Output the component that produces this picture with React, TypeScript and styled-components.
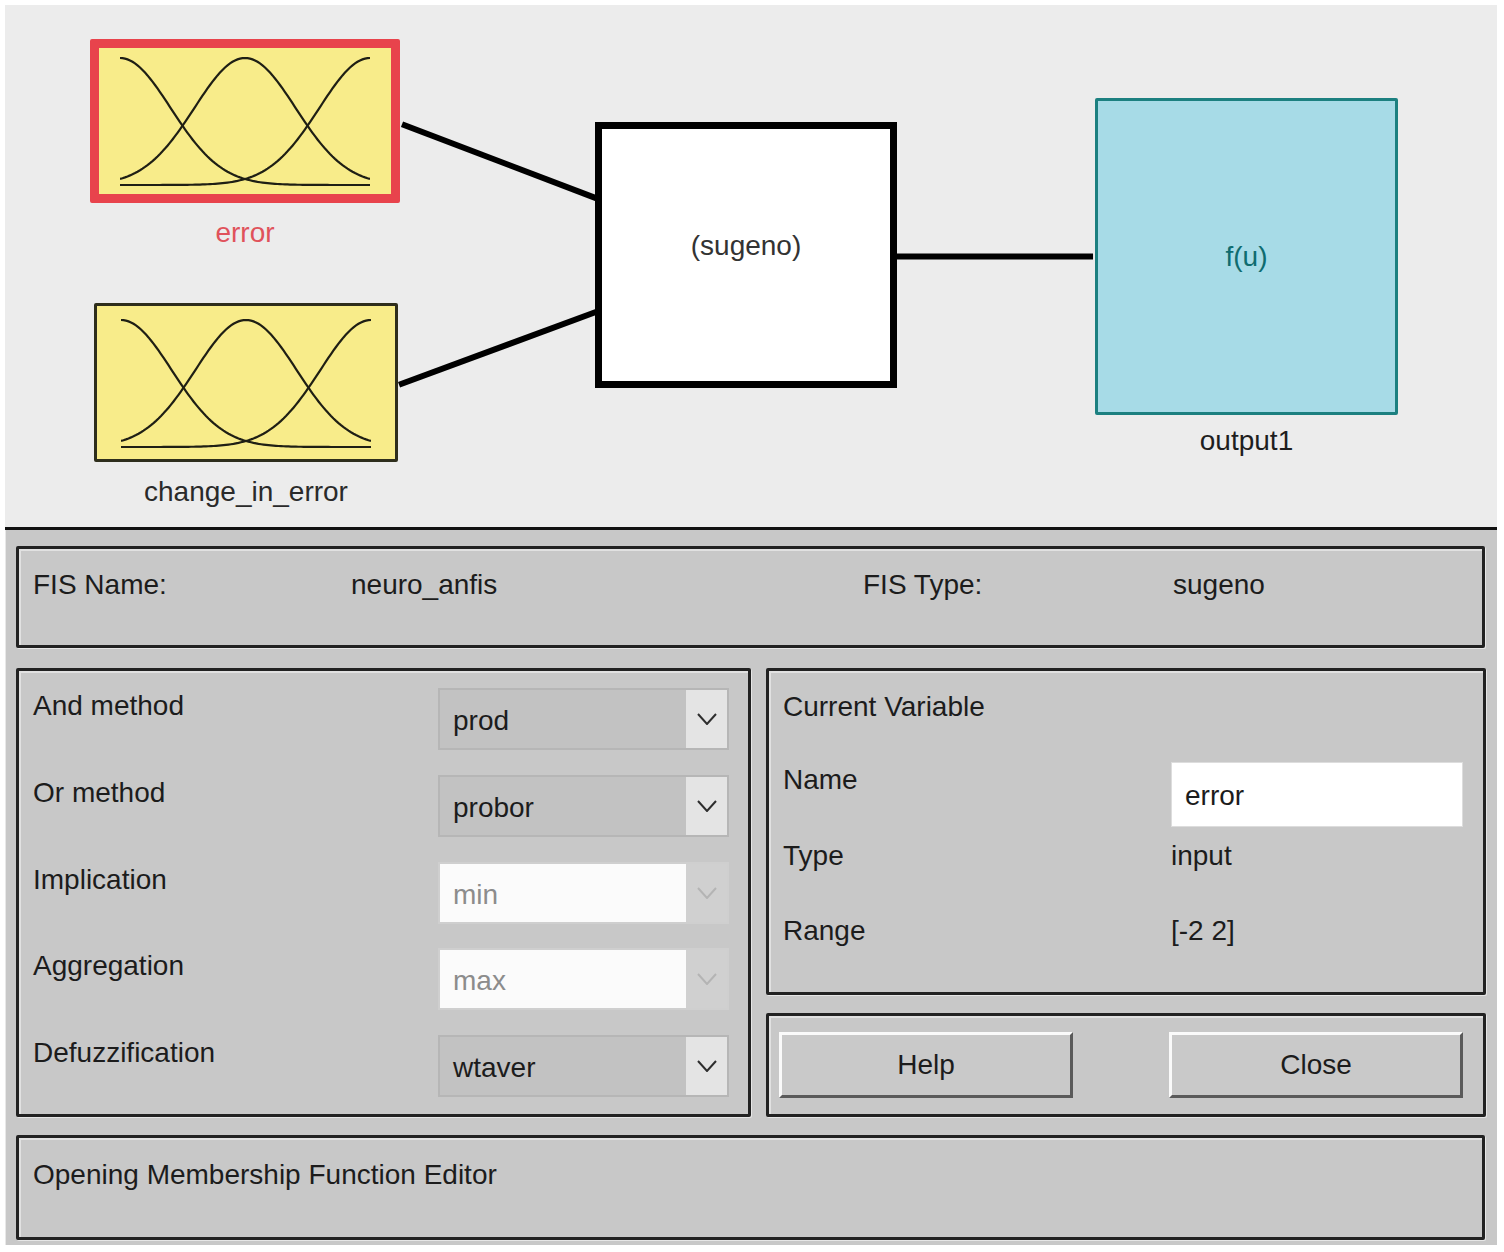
import React from "react";
import styled, { createGlobalStyle } from "styled-components";

const GlobalStyle = createGlobalStyle`
  html, body {
    margin: 0;
    padding: 0;
    background: #ffffff;
  }
  body {
    font-family: "Liberation Sans", Arial, sans-serif;
    color: #1c1c1c;
  }
  * {
    box-sizing: border-box;
  }
`;

const Page = styled.div`
  width: 1504px;
  height: 1252px;
  padding: 5px 7px 7px 5px;
  background: #ffffff;
`;

/* ---------- diagram canvas ---------- */

const Canvas = styled.div`
  position: relative;
  height: 525px;
  background: #ececec;
  border-bottom: 3px solid #111111;
`;

const Wires = styled.svg`
  position: absolute;
  left: 0;
  top: 0;
  width: 100%;
  height: 100%;
`;

const Node = styled.div<{ x: number; y: number; w: number }>`
  position: absolute;
  left: ${(p) => p.x}px;
  top: ${(p) => p.y}px;
  width: ${(p) => p.w}px;
  display: flex;
  flex-direction: column;
  align-items: center;
`;

const VarBox = styled.div<{ h: number; selected?: boolean }>`
  width: 100%;
  height: ${(p) => p.h}px;
  background: #f8ec8a;
  border: ${(p) => (p.selected ? "9px solid #e8434c" : "3px solid #2e2e1c")};
  border-radius: 2px;
  display: flex;
  align-items: center;
  justify-content: center;
`;

const RuleBox = styled.div`
  width: 100%;
  height: 266px;
  background: #ffffff;
  border: 7px solid #000000;
  display: flex;
  align-items: center;
  justify-content: center;
  padding-bottom: 18px;
  font-size: 28px;
  color: #333333;
`;

const OutBox = styled.div`
  width: 100%;
  height: 317px;
  background: #a7dbe7;
  border: 3px solid #1c8080;
  border-radius: 2px;
  display: flex;
  align-items: center;
  justify-content: center;
  font-size: 28px;
  color: #0f6c70;
`;

const NodeLabel = styled.div<{ tone?: string; gap: number }>`
  margin-top: ${(p) => p.gap}px;
  font-size: 28px;
  line-height: 36px;
  color: ${(p) => p.tone || "#2a2a2a"};
  white-space: nowrap;
`;

/* ---------- lower panel ---------- */

const Lower = styled.div`
  height: 715px;
  background: #c8c8c8;
  padding: 16px 12px 5px 10px;
  border-left: 1px solid #e8e8e8;
`;

const Frame = styled.div<{ h: number }>`
  height: ${(p) => p.h}px;
  border: 3px solid #222222;
  border-radius: 2px;
  box-shadow: inset 2px 2px 0 rgba(255, 255, 255, 0.45),
    1px 1px 0 rgba(255, 255, 255, 0.55);
`;

const InfoFrame = styled(Frame)`
  padding: 18px 0 0 14px;
  display: grid;
  grid-template-columns: 318px 512px 310px 1fr;
  align-content: start;
`;

const Text = styled.div<{ muted?: boolean }>`
  font-size: 28px;
  line-height: 36px;
  color: ${(p) => (p.muted ? "#8a8a8a" : "#1c1c1c")};
  white-space: nowrap;
`;

const Middle = styled.div`
  margin-top: 20px;
  display: grid;
  grid-template-columns: 735px 720px;
  column-gap: 15px;
`;

const MethodFrame = styled(Frame)`
  padding: 17px 19px 17px 14px;
  display: flex;
  flex-direction: column;
  gap: 24.75px;
`;

const MethodRow = styled.div`
  display: grid;
  grid-template-columns: 1fr 291px;
  height: 62px;
  align-items: start;
`;

const Select = styled.div<{ disabled?: boolean }>`
  display: flex;
  height: 62px;
  border: 2px solid ${(p) => (p.disabled ? "#cfcfcf" : "#b6b6b6")};
  background: ${(p) => (p.disabled ? "#fbfbfb" : "#c2c2c2")};
`;

const SelectValue = styled.div<{ disabled?: boolean }>`
  flex: 1;
  padding: 4px 0 0 13px;
  font-size: 28px;
  line-height: 54px;
  color: ${(p) => (p.disabled ? "#8c8c8c" : "#1c1c1c")};
`;

const SelectArrow = styled.div<{ disabled?: boolean }>`
  width: 41px;
  background: ${(p) => (p.disabled ? "#d0d0d0" : "#e4e4e4")};
  display: flex;
  align-items: center;
  justify-content: center;
`;

const RightCol = styled.div`
  display: flex;
  flex-direction: column;
  gap: 18px;
`;

const VarFrame = styled(Frame)`
  padding: 18px 20px 0 14px;
`;

const VarRow = styled.div<{ h: number }>`
  height: ${(p) => p.h}px;
  display: grid;
  grid-template-columns: 388px 1fr;
  align-items: start;
`;

const NameInput = styled.div`
  height: 65px;
  background: #ffffff;
  border: 1px solid #dddddd;
  padding: 4px 0 0 13px;
  font-size: 28px;
  line-height: 57px;
  color: #1c1c1c;
`;

const ButtonFrame = styled(Frame)`
  padding: 16px 20px 0 10px;
  display: flex;
  justify-content: space-between;
  align-items: flex-start;
`;

const Button = styled.button`
  width: 294px;
  height: 66px;
  background: #c9c9c9;
  border-top: 3px solid #fafafa;
  border-left: 3px solid #fafafa;
  border-bottom: 3px solid #5a5a5a;
  border-right: 3px solid #5a5a5a;
  font-family: "Liberation Sans", Arial, sans-serif;
  font-size: 28px;
  color: #1c1c1c;
  padding: 0;
`;

const StatusFrame = styled(Frame)`
  margin-top: 18px;
  padding: 19px 14px 0 14px;
`;

/* ---------- drawings ---------- */

const gauss = (u: number, c: number) =>
  Math.exp(-((u - c) * (u - c)) / (2 * 0.656));

const curvePath = (c: number) => {
  const pts: string[] = [];
  for (let i = 0; i <= 100; i++) {
    const u = -2 + (4 * i) / 100;
    const x = ((u + 2) / 4) * 250;
    const y = 129 - gauss(u, c) * 127;
    pts.push(`${i === 0 ? "M" : "L"}${x.toFixed(2)},${y.toFixed(2)}`);
  }
  return pts.join(" ");
};

const MfPlot = () => (
  <svg width="250" height="130" viewBox="0 0 250 130">
    {[-2, 0, 2].map((c) => (
      <path key={c} d={curvePath(c)} fill="none" stroke="#1f1f14" strokeWidth="2.2" />
    ))}
  </svg>
);

const Chevron = ({ color }: { color: string }) => (
  <svg width="20" height="12" viewBox="0 0 20 12">
    <polyline points="1,1 10,11 19,1" fill="none" stroke={color} strokeWidth="2" />
  </svg>
);

const methods = [
  { label: "And method", value: "prod", disabled: false },
  { label: "Or method", value: "probor", disabled: false },
  { label: "Implication", value: "min", disabled: true },
  { label: "Aggregation", value: "max", disabled: true },
  { label: "Defuzzification", value: "wtaver", disabled: false },
];

const App = () => {
  return (
    <Page>
      <GlobalStyle />
      <Canvas>
        <Wires viewBox="0 0 1492 525">
          <line x1="395" y1="120" x2="592" y2="195" stroke="#000" strokeWidth="6" />
          <line x1="392" y1="382" x2="592" y2="308" stroke="#000" strokeWidth="6" />
          <line x1="892" y1="253" x2="1090" y2="253" stroke="#000" strokeWidth="6" />
        </Wires>

        <Node x={85} y={34} w={310}>
          <VarBox h={164} selected>
            <MfPlot />
          </VarBox>
          <NodeLabel gap={12} tone="#e0525b">
            error
          </NodeLabel>
        </Node>

        <Node x={89} y={298} w={304}>
          <VarBox h={159}>
            <MfPlot />
          </VarBox>
          <NodeLabel gap={12}>change_in_error</NodeLabel>
        </Node>

        <Node x={590} y={117} w={302}>
          <RuleBox>(sugeno)</RuleBox>
        </Node>

        <Node x={1090} y={93} w={303}>
          <OutBox>f(u)</OutBox>
          <NodeLabel gap={8} tone="#1e1e1e">
            output1
          </NodeLabel>
        </Node>
      </Canvas>

      <Lower>
        <InfoFrame h={102}>
          <Text>FIS Name:</Text>
          <Text>neuro_anfis</Text>
          <Text>FIS Type:</Text>
          <Text>sugeno</Text>
        </InfoFrame>

        <Middle>
          <MethodFrame h={449}>
            {methods.map((m) => (
              <MethodRow key={m.label}>
                <Text>{m.label}</Text>
                <Select disabled={m.disabled}>
                  <SelectValue disabled={m.disabled}>{m.value}</SelectValue>
                  <SelectArrow disabled={m.disabled}>
                    <Chevron color={m.disabled ? "#b4b4b4" : "#2e2e2e"} />
                  </SelectArrow>
                </Select>
              </MethodRow>
            ))}
          </MethodFrame>

          <RightCol>
            <VarFrame h={327}>
              <VarRow h={73}>
                <Text>Current Variable</Text>
              </VarRow>
              <VarRow h={76}>
                <Text>Name</Text>
                <NameInput>error</NameInput>
              </VarRow>
              <VarRow h={75}>
                <Text>Type</Text>
                <Text>input</Text>
              </VarRow>
              <VarRow h={36}>
                <Text>Range</Text>
                <Text>[-2 2]</Text>
              </VarRow>
            </VarFrame>

            <ButtonFrame h={104}>
              <Button>Help</Button>
              <Button>Close</Button>
            </ButtonFrame>
          </RightCol>
        </Middle>

        <StatusFrame h={105}>
          <Text>Opening Membership Function Editor</Text>
        </StatusFrame>
      </Lower>
    </Page>
  );
};

export default App;
